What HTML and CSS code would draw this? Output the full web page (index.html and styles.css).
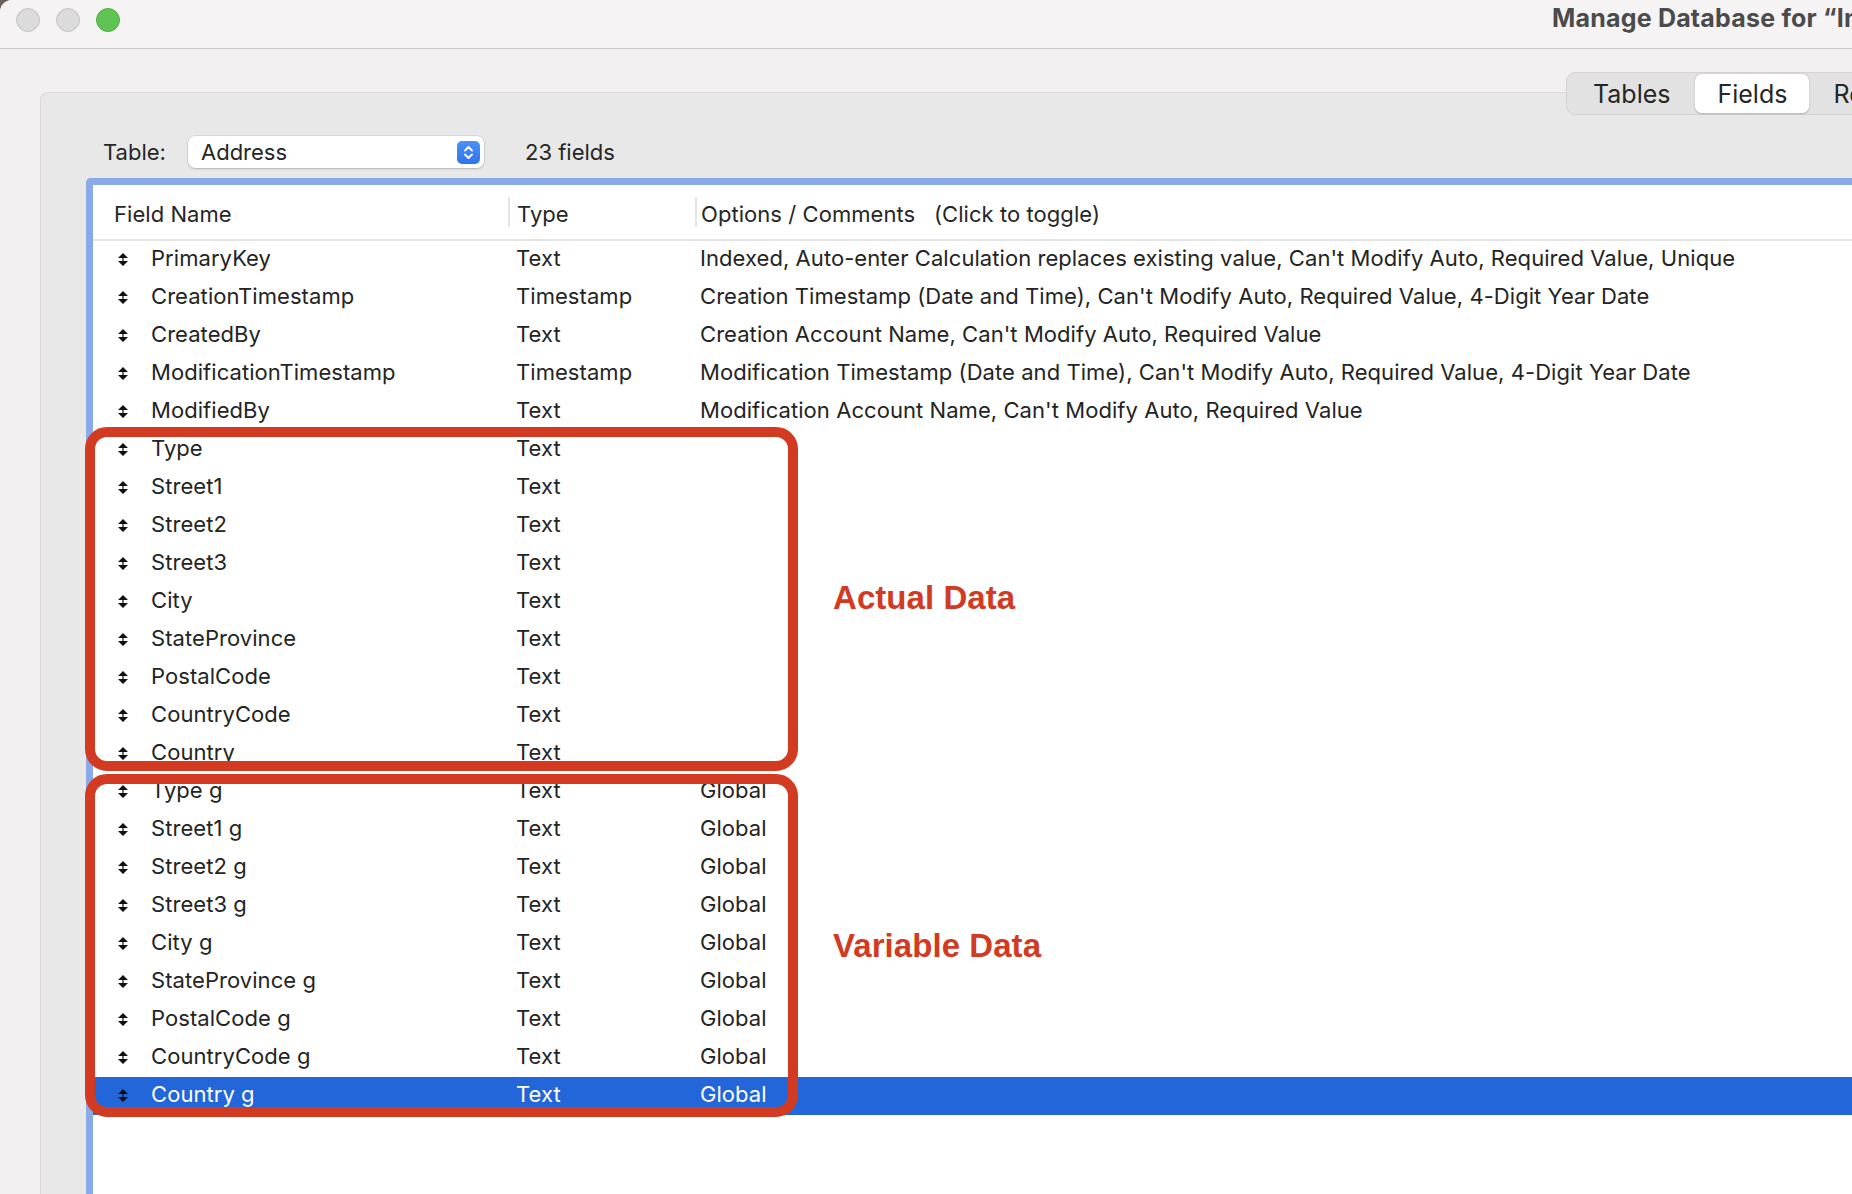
FILE: index.html
```html
<!DOCTYPE html>
<html>
<head>
<meta charset="utf-8">
<title>Manage Database</title>
<link rel="stylesheet" href="styles.css">
</head>
<body>
<div class="window">
  <div class="titlebar">
    <div class="lights">
      <span class="light gray"></span>
      <span class="light gray"></span>
      <span class="light green"></span>
    </div>
    <div class="title">Manage Database for “Inventory.fmp12”</div>
  </div>
  <div class="content">
    <div class="tabrow">
      <div class="segmented">
        <div class="seg first">Tables</div>
        <div class="seg active">Fields</div>
        <div class="seg last">Relationships</div>
      </div>
    </div>
    <div class="panel">
      <div class="tablerow">
        <span class="label">Table:</span>
        <div class="popup">
          <span class="popup-text">Address</span>
          <span class="stepper">
            <svg width="23" height="23" viewBox="0 0 23 23"><path d="M8 9.5 L11.5 6 L15 9.5 M8 13.5 L11.5 17 L15 13.5" fill="none" stroke="#fff" stroke-width="1.8" stroke-linecap="round" stroke-linejoin="round"/></svg>
          </span>
        </div>
        <span class="count">23 fields</span>
      </div>
      <div class="list">
        <div class="header">
          <div class="hcell hname">Field Name</div>
          <span class="sep"></span>
          <div class="hcell htype">Type</div>
          <span class="sep"></span>
          <div class="hcell hopt">Options / Comments   (Click to toggle)</div>
        </div>
        <div class="rows">
          <div class="row"><span class="ic"><svg width="10" height="13" viewBox="0 0 10 13"><path d="M0 5 L5 0 L10 5 Z M0 8 L5 13 L10 8 Z" fill="#111"/><rect x="4.4" y="4" width="1.2" height="5" fill="#111"/></svg></span><span>PrimaryKey</span><span>Text</span><span>Indexed, Auto-enter Calculation replaces existing value, Can't Modify Auto, Required Value, Unique</span></div>
          <div class="row"><span class="ic"><svg width="10" height="13" viewBox="0 0 10 13"><path d="M0 5 L5 0 L10 5 Z M0 8 L5 13 L10 8 Z" fill="#111"/><rect x="4.4" y="4" width="1.2" height="5" fill="#111"/></svg></span><span>CreationTimestamp</span><span>Timestamp</span><span>Creation Timestamp (Date and Time), Can't Modify Auto, Required Value, 4-Digit Year Date</span></div>
          <div class="row"><span class="ic"><svg width="10" height="13" viewBox="0 0 10 13"><path d="M0 5 L5 0 L10 5 Z M0 8 L5 13 L10 8 Z" fill="#111"/><rect x="4.4" y="4" width="1.2" height="5" fill="#111"/></svg></span><span>CreatedBy</span><span>Text</span><span>Creation Account Name, Can't Modify Auto, Required Value</span></div>
          <div class="row"><span class="ic"><svg width="10" height="13" viewBox="0 0 10 13"><path d="M0 5 L5 0 L10 5 Z M0 8 L5 13 L10 8 Z" fill="#111"/><rect x="4.4" y="4" width="1.2" height="5" fill="#111"/></svg></span><span>ModificationTimestamp</span><span>Timestamp</span><span>Modification Timestamp (Date and Time), Can't Modify Auto, Required Value, 4-Digit Year Date</span></div>
          <div class="row"><span class="ic"><svg width="10" height="13" viewBox="0 0 10 13"><path d="M0 5 L5 0 L10 5 Z M0 8 L5 13 L10 8 Z" fill="#111"/><rect x="4.4" y="4" width="1.2" height="5" fill="#111"/></svg></span><span>ModifiedBy</span><span>Text</span><span>Modification Account Name, Can't Modify Auto, Required Value</span></div>
          <div class="row"><span class="ic"><svg width="10" height="13" viewBox="0 0 10 13"><path d="M0 5 L5 0 L10 5 Z M0 8 L5 13 L10 8 Z" fill="#111"/><rect x="4.4" y="4" width="1.2" height="5" fill="#111"/></svg></span><span>Type</span><span>Text</span><span></span></div>
          <div class="row"><span class="ic"><svg width="10" height="13" viewBox="0 0 10 13"><path d="M0 5 L5 0 L10 5 Z M0 8 L5 13 L10 8 Z" fill="#111"/><rect x="4.4" y="4" width="1.2" height="5" fill="#111"/></svg></span><span>Street1</span><span>Text</span><span></span></div>
          <div class="row"><span class="ic"><svg width="10" height="13" viewBox="0 0 10 13"><path d="M0 5 L5 0 L10 5 Z M0 8 L5 13 L10 8 Z" fill="#111"/><rect x="4.4" y="4" width="1.2" height="5" fill="#111"/></svg></span><span>Street2</span><span>Text</span><span></span></div>
          <div class="row"><span class="ic"><svg width="10" height="13" viewBox="0 0 10 13"><path d="M0 5 L5 0 L10 5 Z M0 8 L5 13 L10 8 Z" fill="#111"/><rect x="4.4" y="4" width="1.2" height="5" fill="#111"/></svg></span><span>Street3</span><span>Text</span><span></span></div>
          <div class="row"><span class="ic"><svg width="10" height="13" viewBox="0 0 10 13"><path d="M0 5 L5 0 L10 5 Z M0 8 L5 13 L10 8 Z" fill="#111"/><rect x="4.4" y="4" width="1.2" height="5" fill="#111"/></svg></span><span>City</span><span>Text</span><span></span></div>
          <div class="row"><span class="ic"><svg width="10" height="13" viewBox="0 0 10 13"><path d="M0 5 L5 0 L10 5 Z M0 8 L5 13 L10 8 Z" fill="#111"/><rect x="4.4" y="4" width="1.2" height="5" fill="#111"/></svg></span><span>StateProvince</span><span>Text</span><span></span></div>
          <div class="row"><span class="ic"><svg width="10" height="13" viewBox="0 0 10 13"><path d="M0 5 L5 0 L10 5 Z M0 8 L5 13 L10 8 Z" fill="#111"/><rect x="4.4" y="4" width="1.2" height="5" fill="#111"/></svg></span><span>PostalCode</span><span>Text</span><span></span></div>
          <div class="row"><span class="ic"><svg width="10" height="13" viewBox="0 0 10 13"><path d="M0 5 L5 0 L10 5 Z M0 8 L5 13 L10 8 Z" fill="#111"/><rect x="4.4" y="4" width="1.2" height="5" fill="#111"/></svg></span><span>CountryCode</span><span>Text</span><span></span></div>
          <div class="row"><span class="ic"><svg width="10" height="13" viewBox="0 0 10 13"><path d="M0 5 L5 0 L10 5 Z M0 8 L5 13 L10 8 Z" fill="#111"/><rect x="4.4" y="4" width="1.2" height="5" fill="#111"/></svg></span><span>Country</span><span>Text</span><span></span></div>
          <div class="row"><span class="ic"><svg width="10" height="13" viewBox="0 0 10 13"><path d="M0 5 L5 0 L10 5 Z M0 8 L5 13 L10 8 Z" fill="#111"/><rect x="4.4" y="4" width="1.2" height="5" fill="#111"/></svg></span><span>Type g</span><span>Text</span><span>Global</span></div>
          <div class="row"><span class="ic"><svg width="10" height="13" viewBox="0 0 10 13"><path d="M0 5 L5 0 L10 5 Z M0 8 L5 13 L10 8 Z" fill="#111"/><rect x="4.4" y="4" width="1.2" height="5" fill="#111"/></svg></span><span>Street1 g</span><span>Text</span><span>Global</span></div>
          <div class="row"><span class="ic"><svg width="10" height="13" viewBox="0 0 10 13"><path d="M0 5 L5 0 L10 5 Z M0 8 L5 13 L10 8 Z" fill="#111"/><rect x="4.4" y="4" width="1.2" height="5" fill="#111"/></svg></span><span>Street2 g</span><span>Text</span><span>Global</span></div>
          <div class="row"><span class="ic"><svg width="10" height="13" viewBox="0 0 10 13"><path d="M0 5 L5 0 L10 5 Z M0 8 L5 13 L10 8 Z" fill="#111"/><rect x="4.4" y="4" width="1.2" height="5" fill="#111"/></svg></span><span>Street3 g</span><span>Text</span><span>Global</span></div>
          <div class="row"><span class="ic"><svg width="10" height="13" viewBox="0 0 10 13"><path d="M0 5 L5 0 L10 5 Z M0 8 L5 13 L10 8 Z" fill="#111"/><rect x="4.4" y="4" width="1.2" height="5" fill="#111"/></svg></span><span>City g</span><span>Text</span><span>Global</span></div>
          <div class="row"><span class="ic"><svg width="10" height="13" viewBox="0 0 10 13"><path d="M0 5 L5 0 L10 5 Z M0 8 L5 13 L10 8 Z" fill="#111"/><rect x="4.4" y="4" width="1.2" height="5" fill="#111"/></svg></span><span>StateProvince g</span><span>Text</span><span>Global</span></div>
          <div class="row"><span class="ic"><svg width="10" height="13" viewBox="0 0 10 13"><path d="M0 5 L5 0 L10 5 Z M0 8 L5 13 L10 8 Z" fill="#111"/><rect x="4.4" y="4" width="1.2" height="5" fill="#111"/></svg></span><span>PostalCode g</span><span>Text</span><span>Global</span></div>
          <div class="row"><span class="ic"><svg width="10" height="13" viewBox="0 0 10 13"><path d="M0 5 L5 0 L10 5 Z M0 8 L5 13 L10 8 Z" fill="#111"/><rect x="4.4" y="4" width="1.2" height="5" fill="#111"/></svg></span><span>CountryCode g</span><span>Text</span><span>Global</span></div>
          <div class="row selected"><span class="ic"><svg width="10" height="13" viewBox="0 0 10 13"><path d="M0 5 L5 0 L10 5 Z M0 8 L5 13 L10 8 Z" fill="#111"/><rect x="4.4" y="4" width="1.2" height="5" fill="#111"/></svg></span><span>Country g</span><span>Text</span><span>Global</span></div>
        </div>
        <div class="anno-box box-actual"></div>
        <div class="anno-box box-variable"></div>
        <div class="anno-label label-actual">Actual Data</div>
        <div class="anno-label label-variable">Variable Data</div>
      </div>
    </div>
  </div>
</div>
</body>
</html>
```

FILE: styles.css
```css
html, body {
  margin: 0;
  padding: 0;
}
body {
  width: 1852px;
  height: 1194px;
  overflow: hidden;
  background: #6e5f58;
  font-family: "Inter", "Noto Sans", sans-serif;
  color: #242424;
}
.window {
  width: 1852px;
  height: 1194px;
  background: #f2f0f1;
  border-top-left-radius: 12px;
  overflow: hidden;
  display: flex;
  flex-direction: column;
}
.titlebar {
  height: 48px;
  flex-shrink: 0;
  background: #f5f3f4;
  border-bottom: 1px solid #c9c7c8;
  display: flex;
  align-items: flex-start;
  white-space: nowrap;
}
.lights {
  display: flex;
  gap: 16px;
  margin: 8px 0 0 16px;
}
.light {
  width: 24px;
  height: 24px;
  border-radius: 50%;
  box-sizing: border-box;
}
.light.gray {
  background: #dcdbdb;
  border: 1px solid #c4c3c3;
}
.light.green {
  background: #60c454;
  border: 1px solid #52ad46;
}
.title {
  margin: 4px 0 0 1432px;
  font-size: 25px;
  letter-spacing: 0.2px;
  line-height: 28px;
  font-weight: 700;
  color: #4b4b4b;
}
.content {
  flex: 1;
  padding-top: 23px;
  display: flex;
  flex-direction: column;
}
.tabrow {
  display: flex;
  padding-left: 1566px;
  height: 43px;
  position: relative;
  z-index: 1;
}
.segmented {
  flex-shrink: 0;
  display: flex;
  height: 43px;
  box-sizing: border-box;
  background: #e3e2e3;
  border: 1px solid #d5d4d5;
  border-radius: 9px;
  padding: 1px;
  white-space: nowrap;
}
.seg {
  display: flex;
  align-items: center;
  font-size: 25px;
  color: #262626;
  padding: 0 25px 0 25px;
  border-radius: 7px;
}
.seg.active {
  background: #ffffff;
  padding: 0 22px;
  box-shadow: 0 0.5px 2px rgba(0, 0, 0, 0.22);
}
.seg.last {
  padding-left: 24px;
}
.panel {
  margin: -23px 0 0 40px;
  flex: 1;
  background: #e8e8e8;
  border-top: 1px solid #dadada;
  border-left: 1px solid #dadada;
  border-top-left-radius: 8px;
  padding-top: 43px;
  display: flex;
  flex-direction: column;
}
.tablerow {
  display: flex;
  align-items: center;
  height: 32px;
  padding-left: 62px;
  font-size: 22px;
}
.label {
  width: 85px;
  color: #262626;
}
.popup {
  width: 296px;
  height: 32px;
  box-sizing: border-box;
  background: #ffffff;
  border-radius: 7px;
  box-shadow: 0 0 0 0.5px rgba(0, 0, 0, 0.12), 0 1px 2px rgba(0, 0, 0, 0.18);
  display: flex;
  align-items: center;
  padding: 0 4px 0 13px;
}
.popup-text {
  flex: 1;
  color: #262626;
}
.stepper {
  width: 23px;
  height: 23px;
  border-radius: 5px;
  background: linear-gradient(#4a91f8, #2f74ec);
  display: flex;
}
.count {
  margin-left: 41px;
  color: #262626;
}
.list {
  position: relative;
  flex: 1;
  margin: 10px 0 0 45px;
  background: #ffffff;
  border-top: 7px solid #89a9e7;
  border-left: 7px solid #89a9e7;
  border-top-left-radius: 5px;
  font-size: 22px;
  letter-spacing: 0.06px;
}
.header {
  height: 56px;
  box-sizing: border-box;
  padding-top: 3px;
  border-bottom: 2px solid #e4e4e4;
  display: flex;
  align-items: center;
  white-space: pre;
}
.header .sep {
  margin-top: -3px;
}
.hcell {
  color: #262626;
}
.hname {
  width: 394px;
  padding-left: 21px;
}
.htype {
  width: 178px;
  padding-left: 7px;
}
.hopt {
  padding-left: 4px;
}
.sep {
  width: 2px;
  height: 30px;
  background: #e4e4e4;
}
.row {
  display: grid;
  grid-template-columns: 58px 365px 184px 1fr;
  height: 38px;
  box-sizing: border-box;
  padding-bottom: 5px;
  align-items: center;
  white-space: nowrap;
  color: #242424;
}
.row .ic {
  padding-left: 25px;
  display: flex;
  align-items: center;
  margin-top: 3px;
}
.row.selected {
  background: #2366d9;
  color: #ffffff;
}
.anno-box {
  position: absolute;
  left: -8px;
  width: 713px;
  box-sizing: border-box;
  border: 10px solid #d23b22;
  border-radius: 22px;
}
.box-actual {
  top: 242px;
  height: 344px;
}
.box-variable {
  top: 589px;
  height: 343px;
}
.anno-label {
  position: absolute;
  left: 740px;
  font-family: "Liberation Sans", Arial, sans-serif;
  font-weight: 700;
  font-size: 33px;
  line-height: 33px;
  color: #d23b22;
  white-space: nowrap;
}
.label-actual {
  top: 396px;
}
.label-variable {
  top: 744px;
}
```
